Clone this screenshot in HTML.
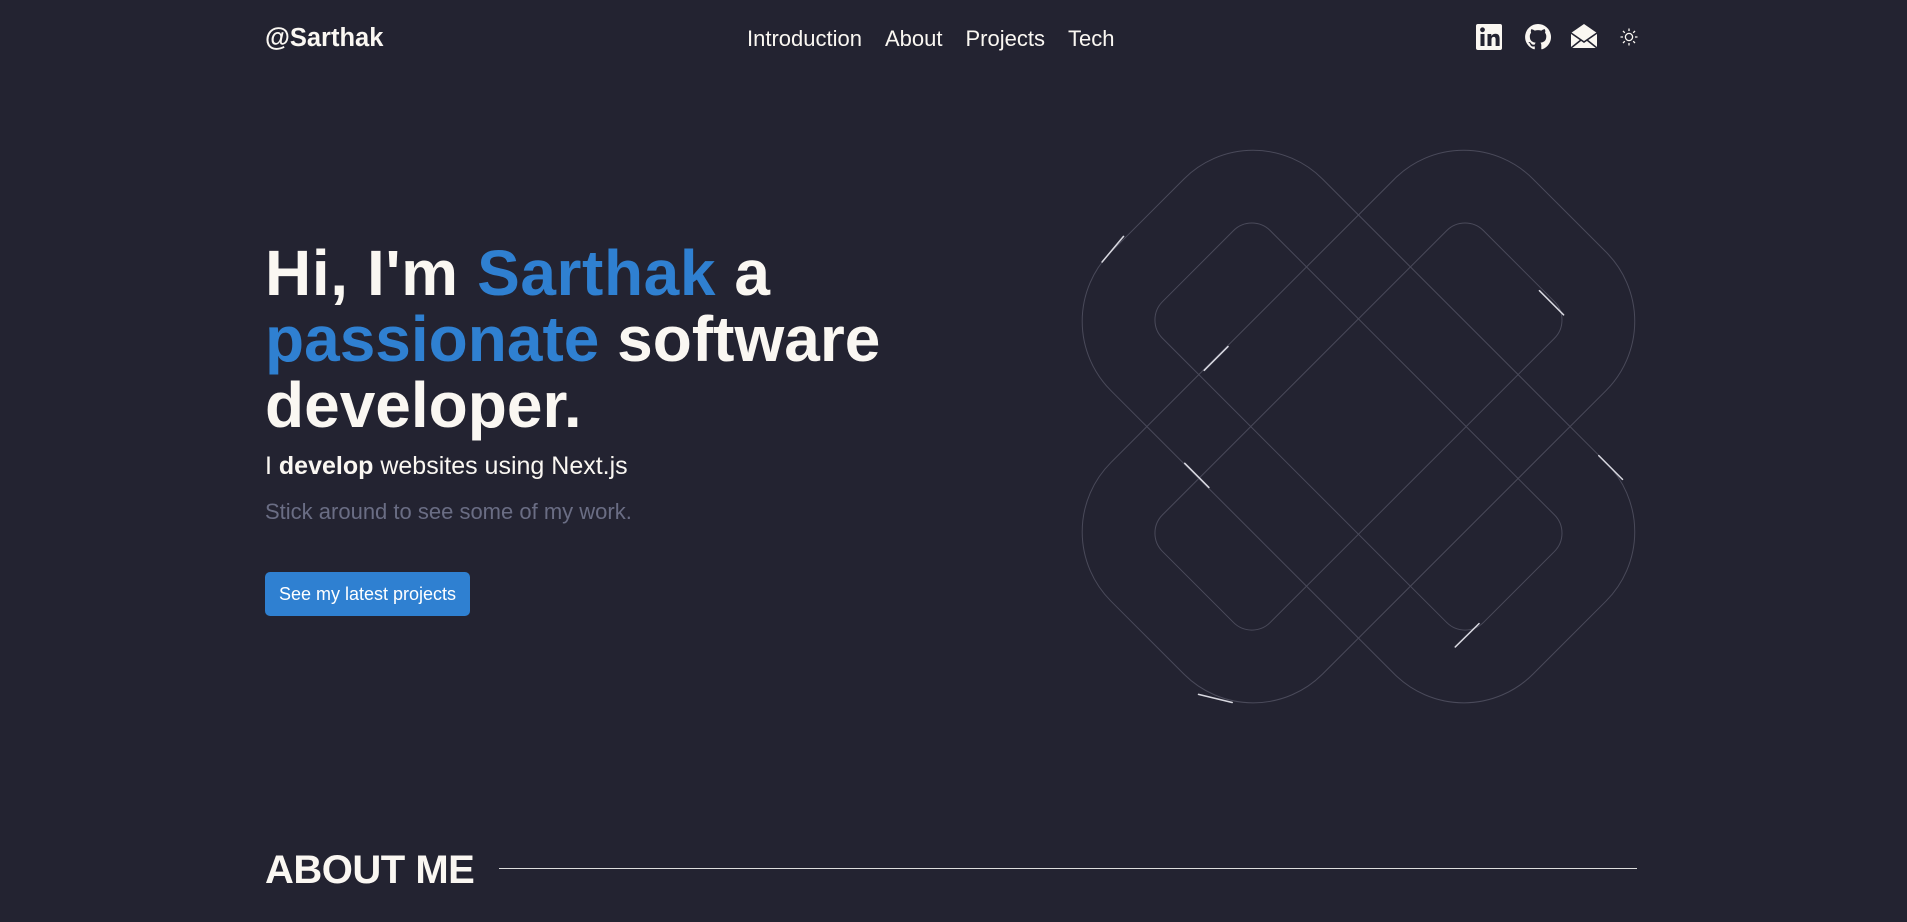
<!DOCTYPE html>
<html><head><meta charset="utf-8"><style>
*{margin:0;padding:0;box-sizing:border-box}
html,body{width:1907px;height:922px;overflow:hidden;background:#232331;font-family:"Liberation Sans",sans-serif;color:#faf7f2}
.abs{position:absolute;white-space:nowrap}
.logo{left:265px;top:24px;font-size:25.5px;font-weight:bold}
.nav{top:26px;font-size:22px;left:747px}
.nav span{margin-right:23px}
h1{position:absolute;left:265px;top:240px;font-size:64px;line-height:66px;font-weight:bold}
h1 .s{letter-spacing:0.6px}
.b{color:#2f80d1}
.sub{left:265px;top:452px;font-size:25px}
.stick{left:265px;top:499px;font-size:22px;color:#6a6d84}
.btn{position:absolute;left:265px;top:572px;width:205px;height:44px;background:#2f80d1;border-radius:5px;color:#fff;font-size:18px;line-height:44px;text-align:center}
.about{left:265px;top:848px;font-size:40px;font-weight:900;letter-spacing:-0.5px}
.line{position:absolute;left:499px;top:868px;width:1138px;height:1px;background:#ddd}
</style></head><body>
<div class="abs logo">@Sarthak</div>
<div class="abs nav"><span>Introduction</span><span>About</span><span>Projects</span><span>Tech</span></div>
<svg class="abs" style="left:1474px;top:22px" width="170" height="30" viewBox="0 0 170 30">
<rect x="2" y="2" width="26" height="26" rx="2" fill="#faf7f2"/>
<rect x="6.5" y="12" width="4" height="12" fill="#232331"/><circle cx="8.5" cy="7.8" r="2.4" fill="#232331"/>
<path d="M13.5 12h3.8v2c1-1.6 2.6-2.3 4.3-2.3 3 0 4 2 4 5V24h-4v-6.5c0-1.6-.5-2.6-1.8-2.6-1.5 0-2.3 1-2.3 2.7V24h-4z" fill="#232331"/>
<path d="M64 2a13 13 0 0 0-4.1 25.3c.7.1.9-.3.9-.6v-2.3c-3.6.8-4.4-1.7-4.4-1.7-.6-1.5-1.4-1.9-1.4-1.9-1.2-.8.1-.8.1-.8 1.3.1 2 1.3 2 1.3 1.2 2 3.1 1.4 3.8 1.1.1-.8.5-1.4.8-1.7-2.9-.3-5.9-1.4-5.9-6.4 0-1.4.5-2.6 1.3-3.5-.1-.3-.6-1.7.1-3.5 0 0 1.1-.3 3.6 1.3a12.400 12.400 0 0 1 6.5 0c2.5-1.7 3.6-1.3 3.6-1.3.7 1.8.3 3.100.1 3.500.8.9 1.300 2.100 1.300 3.500 0 5-3 6.100-5.900 6.400.5.400.9 1.200.9 2.400v3.600c0 .3.200.7.900.600A13 13 0 0 0 64 2z" fill="#faf7f2"/>
<path d="M97 11l13-9 13 9v15H97z" fill="#faf7f2"/>
<path d="M97 11l13 9 13-9M97 26l10-8M123 26l-10-8" stroke="#232331" stroke-width="1.6" fill="none"/>
<g stroke="#faf7f2" stroke-width="1.3" fill="none"><circle cx="155" cy="15" r="3.6"/>
<path d="M155 6.5v2.5M155 21v2.5M146.5 15h2.5M161 15h2.5M149 9l1.8 1.8M159.2 19.2l1.8 1.8M149 21l1.8-1.8M159.2 10.8l1.8-1.8"/></g>
</svg>
<h1><span class="s">Hi, I'm <span class="b">Sarthak</span> a</span><br><span class="b">passionate</span> software<br>developer.</h1>
<div class="abs sub">I <b>develop</b> websites using Next.js</div>
<div class="abs stick">Stick around to see some of my work.</div>
<div class="btn">See my latest projects</div>
<svg class="abs" style="left:1060px;top:130px" width="600" height="600" viewBox="0 0 1568 1568">
<g fill="none" stroke="#4a4a5a" stroke-width="2.6">
<g transform="rotate(45 780 775)">
<rect x="0" y="384" width="1560" height="782" rx="256"/>
<rect x="187" y="576" width="1186" height="398" rx="68"/>
</g>
<g transform="rotate(-45 780 775)">
<rect x="0" y="384" width="1560" height="782" rx="256"/>
<rect x="187" y="576" width="1186" height="398" rx="68"/>
</g>
</g>
<g stroke="#d8d8e0" stroke-width="4" stroke-linecap="round">
<path d="M110 345L166 278M377 628L439 566M326 871L389 934M1253 420L1316 483M1408 851L1470 913M1033 1351L1095 1290M362 1475L450 1496"/>
</g>
</svg>
<div class="abs about">ABOUT ME</div>
<div class="line"></div>
</body></html>
